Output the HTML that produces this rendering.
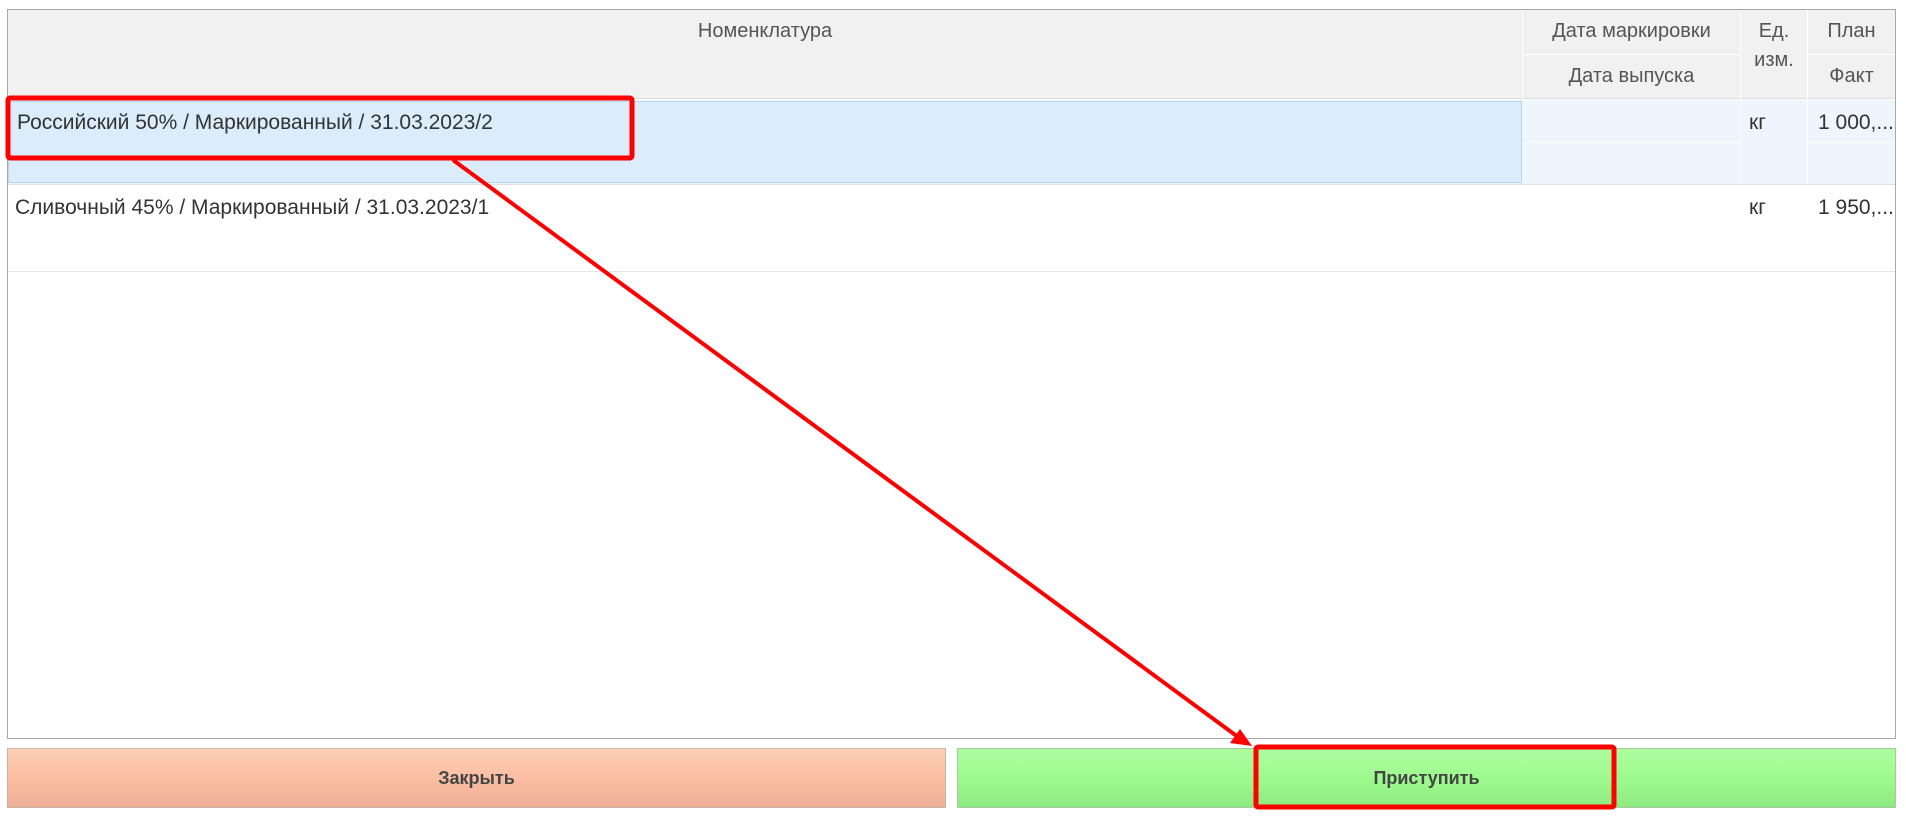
<!DOCTYPE html>
<html><head><meta charset="utf-8"><style>
body{margin:0;width:1906px;height:821px;background:#fff;position:relative;overflow:hidden;font-family:"Liberation Sans",sans-serif;color:#333}
div{position:absolute;box-sizing:border-box}
.t{font-size:21px;white-space:nowrap}
.h{font-size:20px;color:#555;text-align:center;white-space:nowrap}
</style></head><body>
<div style="left:7px;top:9px;width:1889px;height:730px;border:1px solid #a8a8a8;background:#fff"></div>
<!-- header -->
<div style="left:8px;top:10px;width:1887px;height:89px;background:#f1f1f1;border-bottom:1px solid #ddd"></div>
<div style="left:1522px;top:10px;width:1px;height:89px;background:#fff"></div>
<div style="left:1740px;top:10px;width:1px;height:89px;background:#fff"></div>
<div style="left:1807px;top:10px;width:1px;height:89px;background:#fff"></div>
<div style="left:1523px;top:54px;width:217px;height:1px;background:#fff"></div>
<div style="left:1808px;top:54px;width:87px;height:1px;background:#fff"></div>
<div class="h" style="left:8px;top:20px;width:1514px">Номенклатура</div>
<div class="h" style="left:1523px;top:20px;width:217px">Дата маркировки</div>
<div class="h" style="left:1523px;top:65px;width:217px">Дата выпуска</div>
<div class="h" style="left:1741px;top:20px;width:66px">Ед.</div>
<div class="h" style="left:1741px;top:49px;width:66px">изм.</div>
<div class="h" style="left:1808px;top:20px;width:87px">План</div>
<div class="h" style="left:1808px;top:65px;width:87px">Факт</div>
<!-- row1 -->
<div style="left:8px;top:100px;width:1887px;height:84px;background:#eef5fd"></div>
<div style="left:8px;top:101px;width:1514px;height:82px;background:#dbecfb;border:1px solid #b3d6f3"></div>
<div style="left:1523px;top:142px;width:217px;height:1px;background:#fff"></div>
<div style="left:1808px;top:142px;width:87px;height:1px;background:#fff"></div>
<div style="left:1740px;top:100px;width:1px;height:84px;background:#fff"></div>
<div style="left:1807px;top:100px;width:1px;height:84px;background:#fff"></div>
<div style="left:8px;top:184px;width:1887px;height:1px;background:#e2e2e2"></div>
<div class="t" style="left:17px;top:111px">Российский 50% / Маркированный / 31.03.2023/2</div>
<div class="t" style="left:1749px;top:111px">кг</div>
<div class="t" style="left:1818px;top:111px">1 000,...</div>
<!-- row2 -->
<div style="left:8px;top:271px;width:1887px;height:1px;background:#e6e6e6"></div>
<div class="t" style="left:15px;top:196px">Сливочный 45% / Маркированный / 31.03.2023/1</div>
<div class="t" style="left:1749px;top:196px">кг</div>
<div class="t" style="left:1818px;top:196px">1 950,...</div>
<!-- buttons -->
<div style="left:7px;top:748px;width:939px;height:60px;background:linear-gradient(#fdcfb7,#fbbea2 50%,#eeae96);border:1px solid #c9b3a8;font-weight:bold;font-size:18px;color:#444;text-align:center;line-height:58px">Закрыть</div>
<div style="left:957px;top:748px;width:939px;height:60px;background:linear-gradient(#adfda0,#9cfa8c 55%,#8fe982);border:1px solid #a8c8a0;font-weight:bold;font-size:18px;color:#444;text-align:center;line-height:58px">Приступить</div>
<svg width="1906" height="821" style="position:absolute;left:0;top:0">
<rect x="8" y="98" width="624" height="60" fill="none" stroke="#f00" stroke-width="5" rx="2"/>
<rect x="1256" y="747" width="358" height="60" fill="none" stroke="#f00" stroke-width="5" rx="2"/>
<line x1="453" y1="160" x2="1238" y2="737" stroke="#f00" stroke-width="4"/>
<polygon points="1252,746 1230,743 1240,729" fill="#f00"/>
</svg>
</body></html>
